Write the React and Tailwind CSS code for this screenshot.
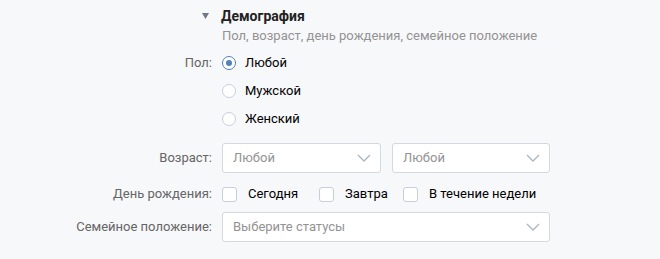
import React from "react";

const Chevron = () => (
  <svg width="14" height="8" viewBox="0 0 14 8" className="shrink-0">
    <path d="M1 1l6 6 6-6" fill="none" stroke="#aab5c2" strokeWidth="1.3" />
  </svg>
);

const Select = ({ text, className }) => (
  <div
    className={`flex h-[30px] items-center justify-between rounded-[3px] border border-[#d3d9de] bg-white pl-[10px] pr-[9px] text-[#939393] ${className}`}
  >
    <span>{text}</span>
    <Chevron />
  </div>
);

const Radio = ({ checked, label }) => (
  <div className="flex h-[28px] items-center">
    <span
      className={`flex h-[14px] w-[14px] items-center justify-center rounded-full border ${
        checked ? "border-[#5181b8]" : "border-[#c5d0db]"
      } bg-white`}
    >
      {checked && <span className="h-[6px] w-[6px] rounded-full bg-[#5181b8]" />}
    </span>
    <span className="ml-[9px] text-black">{label}</span>
  </div>
);

const Checkbox = ({ label, className }) => (
  <div className={`flex shrink-0 items-center ${className}`}>
    <span className="h-[15px] w-[15px] shrink-0 rounded-[3px] border border-[#c5d0db] bg-white" />
    <span className="ml-[11px] text-black">{label}</span>
  </div>
);

const Row = ({ label, children, className }) => (
  <div className={`flex ${className}`}>
    <div className="w-[222px] shrink-0 pr-[10px] text-right text-[#656565]">{label}</div>
    <div className="flex-1">{children}</div>
  </div>
);

export default function App() {
  return (
    <div className="h-[259px] w-[660px] bg-[#f7f8fa] font-['Roboto',sans-serif] text-[13px] leading-[16px]">
      <div className="pt-[6px]">
        <div className="flex h-[20px] items-center">
          <svg width="7" height="6" viewBox="0 0 7 6" className="ml-[202px]">
            <path d="M0 0h7L3.5 6z" fill="#6f7985" />
          </svg>
          <span className="ml-[12px] text-[14px] font-bold text-[#222]">Демография</span>
        </div>
        <div className="ml-[222px] flex h-[20px] items-center text-[#939393]">
          Пол, возраст, день рождения, семейное положение
        </div>
      </div>

      <Row label={<div className="flex h-[28px] items-center justify-end">Пол:</div>} className="mt-[3px]">
        <Radio checked label="Любой" />
        <Radio label="Мужской" />
        <Radio label="Женский" />
      </Row>

      <Row
        label={<div className="flex h-[30px] items-center justify-end">Возраст:</div>}
        className="mt-[10px]"
      >
        <div className="flex w-[328px] gap-[11px]">
          <Select text="Любой" className="w-[159px]" />
          <Select text="Любой" className="w-[158px]" />
        </div>
      </Row>

      <Row
        label={<div className="flex h-[28px] items-center justify-end">День рождения:</div>}
        className="mt-[7px]"
      >
        <div className="flex h-[28px] items-center">
          <Checkbox label="Сегодня" className="w-[97px]" />
          <Checkbox label="Завтра" className="w-[84px]" />
          <Checkbox label="В течение недели" />
        </div>
      </Row>

      <Row
        label={<div className="flex h-[30px] items-center justify-end">Семейное положение:</div>}
        className="mt-[4px]"
      >
        <Select text="Выберите статусы" className="w-[328px]" />
      </Row>
    </div>
  );
}
